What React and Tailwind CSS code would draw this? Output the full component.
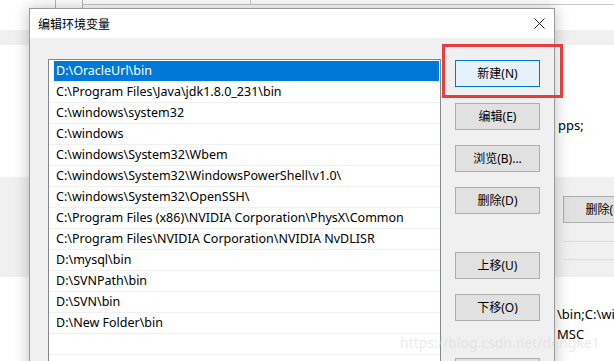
import React from 'react';

const paths = [
  'D:\\OracleUrl\\bin',
  'C:\\Program Files\\Java\\jdk1.8.0_231\\bin',
  'C:\\windows\\system32',
  'C:\\windows',
  'C:\\windows\\System32\\Wbem',
  'C:\\windows\\System32\\WindowsPowerShell\\v1.0\\',
  'C:\\windows\\System32\\OpenSSH\\',
  'C:\\Program Files (x86)\\NVIDIA Corporation\\PhysX\\Common',
  'C:\\Program Files\\NVIDIA Corporation\\NVIDIA NvDLISR',
  'D:\\mysql\\bin',
  'D:\\SVNPath\\bin',
  'D:\\SVN\\bin',
  'D:\\New Folder\\bin',
  '',
  '',
];

const font = { fontFamily: '"Noto Sans", "Noto Sans CJK SC", sans-serif' };

function Btn({ label, primary, className = '' }) {
  return (
    <div
      className={`h-[27px] w-[85px] flex items-center justify-center text-[12px] text-black border ${
        primary ? 'bg-[#e5f1fb] border-[#0078d7]' : 'bg-[#e1e1e1] border-[#adadad]'
      } ${className}`}
    >
      {label}
    </div>
  );
}

export default function App() {
  return (
    <div className="relative w-[614px] h-[361px] overflow-hidden bg-[#f6f6f6]" style={font}>
      {/* window behind the dialog */}
      <div className="absolute inset-0 flex flex-col">
        <div className="h-[30px] bg-white relative">
          <div className="absolute left-[55px] top-0 h-[10px] w-px bg-[#b4b4b4]" />
          <div className="absolute left-[82px] top-0 h-[10px] w-px bg-[#b4b4b4]" />
          <div className="absolute left-[82px] top-[4px] right-0 h-px bg-[#c8c8c8]" />
          <div className="absolute left-[250px] top-0 h-[5px] w-px bg-[#c8c8c8]" />
        </div>
        <div className="h-[15px] bg-[#f0f0f0]" />
        <div className="h-[132px] bg-white pl-[558px] pt-[71px] text-[13px] text-black leading-[18px]">pps;</div>
        <div className="h-[100px] bg-[#f0f0f0] pl-[563px] pt-[19px] flex flex-col">
          <Btn label="删除(D)" className="w-[85px] shrink-0" />
          <div className="mt-[18px] h-px bg-[#dcdcdc] w-full" />
          <div className="mt-[17px] h-px bg-[#dcdcdc] w-full" />
        </div>
        <div className="flex-1 bg-white pl-[557px] pt-[27px] text-[13px] text-black leading-[20px] whitespace-nowrap">
          <div>\bin;C:\windows</div>
          <div>MSC</div>
        </div>
      </div>

      {/* dialog */}
      <div className="absolute left-[29px] top-[8px] w-[526px] h-[380px] flex flex-col border border-[#9a9a9a] shadow-[0_0_14px_rgba(0,0,0,0.25)]">
        <div className="h-[29px] bg-white flex items-center justify-between pl-[8px] pr-[9px]">
          <span className="text-[12px] text-black" style={{ fontFamily: '"Noto Sans CJK SC", sans-serif' }}>
            编辑环境变量
          </span>
          <svg width="11" height="11" viewBox="0 0 11 11">
            <path d="M0.5 0.5 L10.5 10.5 M10.5 0.5 L0.5 10.5" stroke="#222" strokeWidth="1" />
          </svg>
        </div>
        <div className="flex-1 bg-[#f0f0f0] flex pl-[18px] pt-[21px]">
          <div className="w-[393px] border border-[#828790] bg-white pt-px">
            {paths.map((p, i) => (
              <div key={i} className="h-[21px] border-b border-[#f0f0f0] pl-[5px] pr-px">
                <div
                  className={`h-[20px] flex items-center pl-[2px] text-[12.5px] whitespace-nowrap ${
                    i === 0 ? 'bg-[#0078d7] text-white' : 'text-black'
                  }`}
                >
                  {p}
                </div>
              </div>
            ))}
          </div>
          <div className="flex flex-col ml-[14px] pt-px">
            <Btn label="新建(N)" primary />
            <Btn label="编辑(E)" className="mt-[16px]" />
            <Btn label="浏览(B)..." className="mt-[15px]" />
            <Btn label="删除(D)" className="mt-[15px]" />
            <Btn label="上移(U)" className="mt-[38px]" />
            <Btn label="下移(O)" className="mt-[15px]" />
            <Btn label="编辑文本(T)..." className="mt-[37px]" />
          </div>
        </div>
      </div>

      {/* highlight box */}
      <div className="absolute left-[442px] top-[44px] w-[121px] h-[54px] border-[3px] border-[#e53e3e]" />

      {/* watermark */}
      <div className="absolute left-[400px] top-[332px] text-[14px] text-[rgba(215,215,215,0.55)] whitespace-nowrap">
        https://blog.csdn.net/dengke1
      </div>
    </div>
  );
}
